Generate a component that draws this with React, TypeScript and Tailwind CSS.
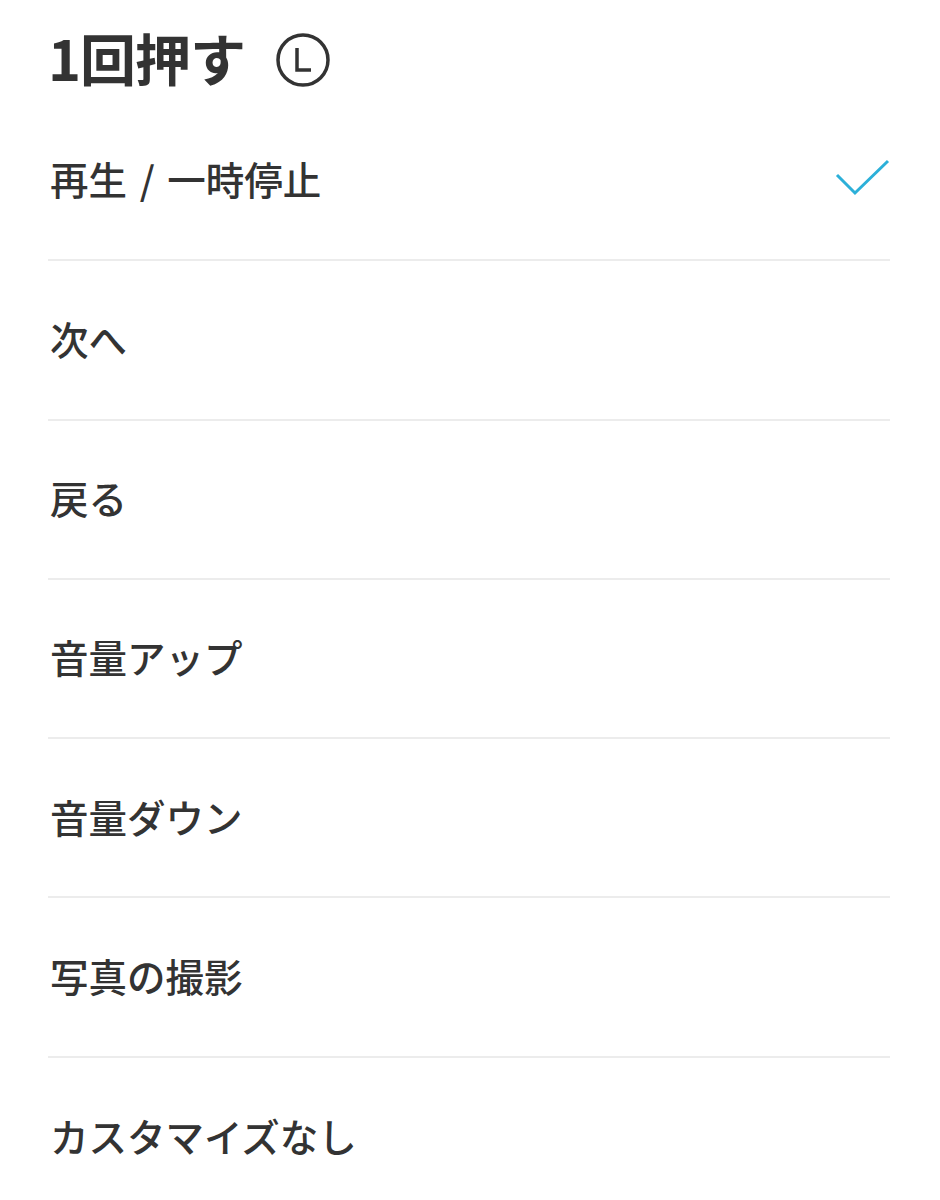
const items = [
  '再生 / 一時停止',
  '次へ',
  '戻る',
  '音量アップ',
  '音量ダウン',
  '写真の撮影',
  'カスタマイズなし',
];

export default function App() {
  const selected = 0;

  return (
    <div
      className="w-[940px] h-[1200px] bg-white text-[#333333] overflow-hidden"
      style={{ fontFamily: '"Noto Sans CJK JP", "Noto Sans", sans-serif' }}
    >
      {/* Header */}
      <div className="h-[102px] pl-[48px] pr-[50px] flex items-center gap-[30px] pt-[12px]">
        <h1 className="text-[56px] font-bold leading-none tracking-[-1px]">1回押す</h1>
        <svg width="56" height="56" viewBox="0 0 56 56" className="mt-[6px]">
          <circle cx="28" cy="28" r="25" fill="none" stroke="#333333" strokeWidth="3.5" />
          <path d="M22 16 V38 H36" fill="none" stroke="#333333" strokeWidth="3.5" />
        </svg>
      </div>

      {/* Options */}
      <div className="pl-[48px] pr-[50px]">
        {items.map((item, i) => (
          <div
            key={item}
            className={
              'h-[159.3px] flex items-center justify-between ' +
              (i < items.length - 1 ? 'border-b-2 border-[#ececec]' : '')
            }
          >
            <span className="pl-[2px] pb-[4px] text-[38.5px] font-medium leading-none [word-spacing:4px]">
              {item}
            </span>
            {i === selected && (
              <svg width="56" height="40" viewBox="0 0 56 40" className="mt-[-4px]">
                <path d="M3 16 L21 34 L54 2" fill="none" stroke="#2cb0d9" strokeWidth="3" />
              </svg>
            )}
          </div>
        ))}
      </div>
    </div>
  );
}
